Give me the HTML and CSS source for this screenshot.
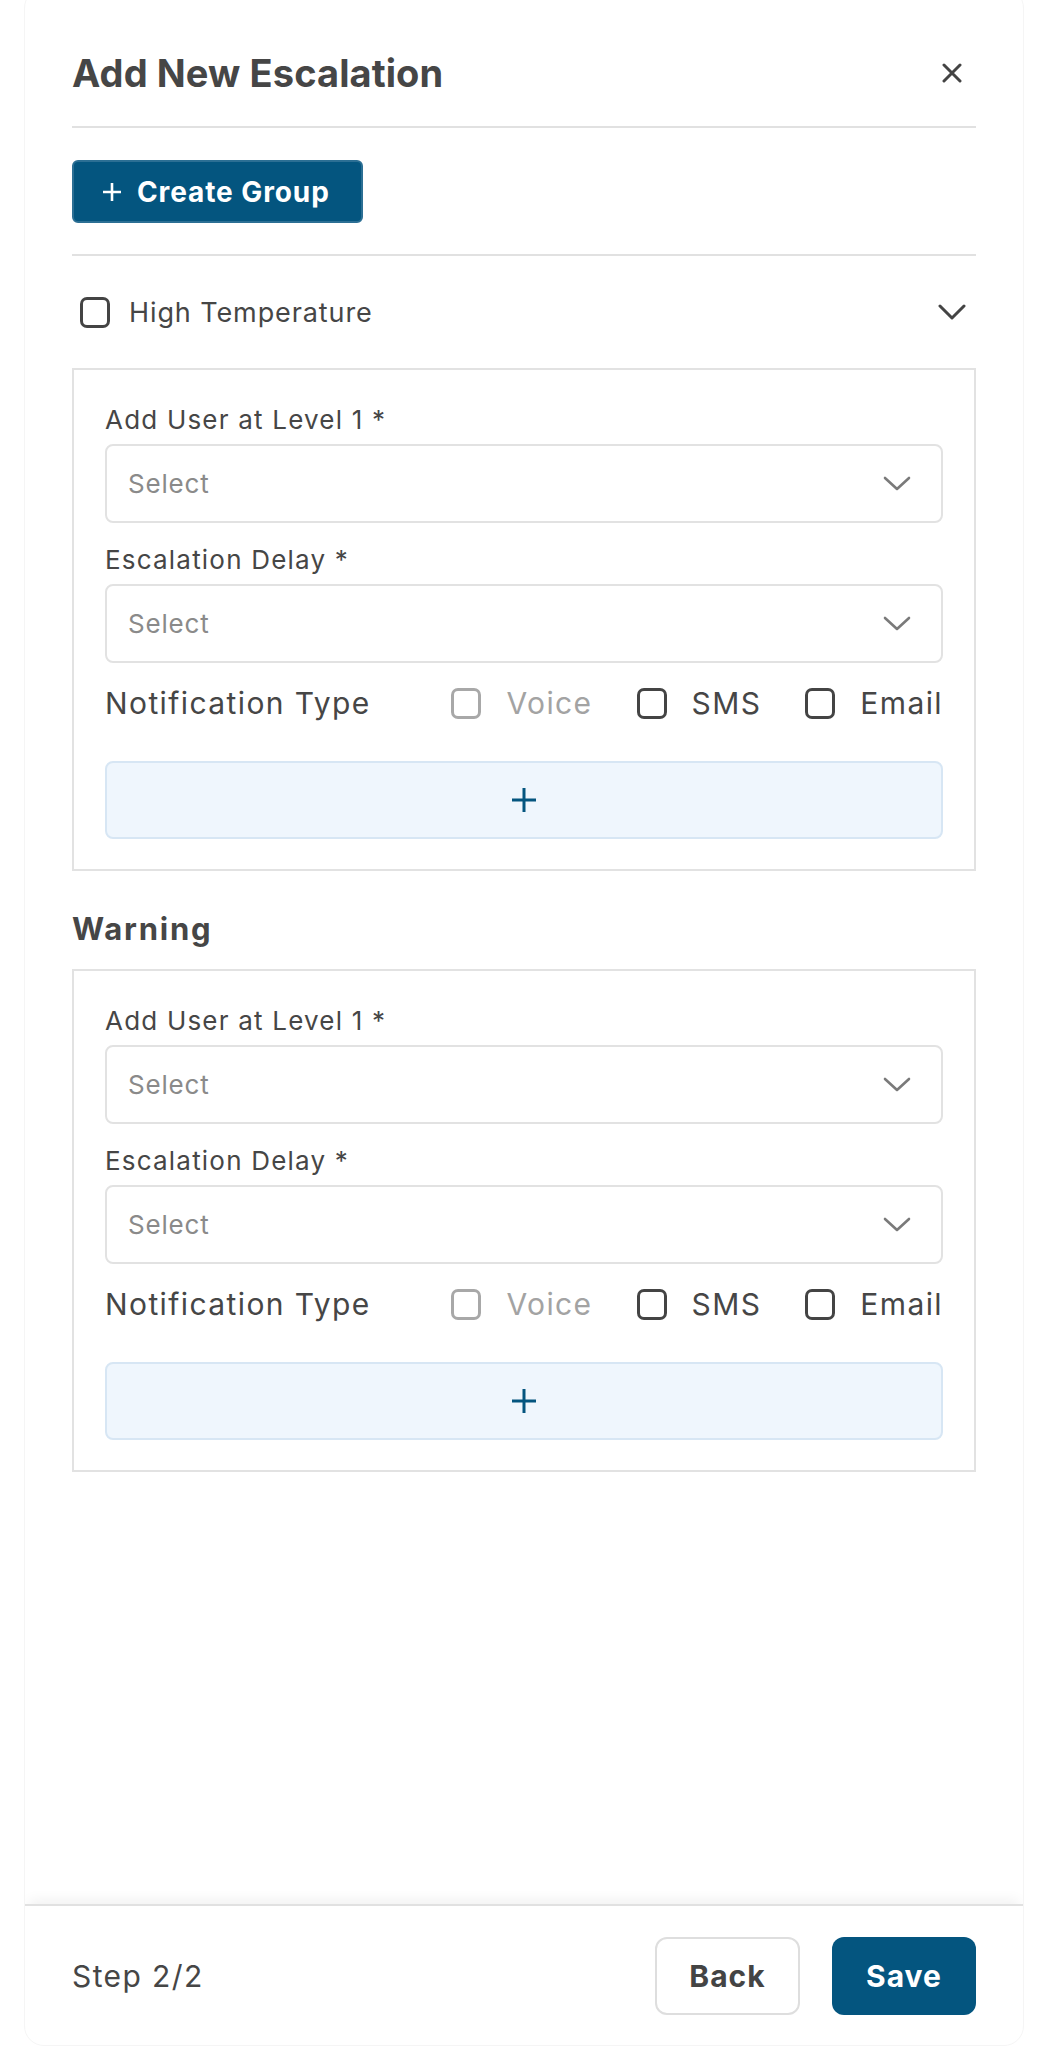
FILE: index.html
```html
<!DOCTYPE html>
<html lang="en">
<head>
  <meta charset="UTF-8">
  <meta name="viewport" content="width=device-width, initial-scale=1.0">
  <title>Add New Escalation</title>
  <link rel="stylesheet" href="styles.css">
</head>

<body>
  <div class="modal">
    <div class="modal-body">
      <div class="modal-head">
        <h2>Add New Escalation</h2>
        <button class="icon-btn" aria-label="Close">
          <svg width="20" height="20" viewBox="0 0 20 20"><path d="M2 2 L18 18 M18 2 L2 18" stroke="#444" stroke-width="3" stroke-linecap="round"/></svg>
        </button>
      </div>

      <div class="toolbar">
        <button class="btn-create">
          <svg width="20" height="20" viewBox="0 0 20 20"><path d="M10 1 V19 M1 10 H19" stroke="#fff" stroke-width="2.6"/></svg>
          Create Group
        </button>
      </div>

      <div class="group-row">
        <label class="check"><span class="box"></span>High Temperature</label>
        <span class="icon-btn">
          <svg width="28" height="16" viewBox="0 0 28 16"><path d="M2 2 L14 14 L26 2" fill="none" stroke="#444" stroke-width="3" stroke-linecap="round" stroke-linejoin="round"/></svg>
        </span>
      </div>

      <div class="level-card">
        <div class="field">
          <label>Add User at Level 1 *</label>
          <div class="select">Select
            <svg width="28" height="15" viewBox="0 0 28 15"><path d="M2 2 L14 13 L26 2" fill="none" stroke="#7a7a7a" stroke-width="2.6" stroke-linecap="round" stroke-linejoin="round"/></svg>
          </div>
        </div>
        <div class="field">
          <label>Escalation Delay *</label>
          <div class="select">Select
            <svg width="28" height="15" viewBox="0 0 28 15"><path d="M2 2 L14 13 L26 2" fill="none" stroke="#7a7a7a" stroke-width="2.6" stroke-linecap="round" stroke-linejoin="round"/></svg>
          </div>
        </div>
        <div class="notif">
          <span>Notification Type</span>
          <div class="options">
            <label class="opt disabled"><span class="box"></span>Voice</label>
            <label class="opt"><span class="box"></span>SMS</label>
            <label class="opt"><span class="box"></span>Email</label>
          </div>
        </div>
        <button class="add-level" aria-label="Add level">
          <svg width="26" height="26" viewBox="0 0 26 26"><path d="M13 1 V25 M1 13 H25" stroke="#04557f" stroke-width="3"/></svg>
        </button>
      </div>

      <h3 class="section-title">Warning</h3>

      <div class="level-card">
        <div class="field">
          <label>Add User at Level 1 *</label>
          <div class="select">Select
            <svg width="28" height="15" viewBox="0 0 28 15"><path d="M2 2 L14 13 L26 2" fill="none" stroke="#7a7a7a" stroke-width="2.6" stroke-linecap="round" stroke-linejoin="round"/></svg>
          </div>
        </div>
        <div class="field">
          <label>Escalation Delay *</label>
          <div class="select">Select
            <svg width="28" height="15" viewBox="0 0 28 15"><path d="M2 2 L14 13 L26 2" fill="none" stroke="#7a7a7a" stroke-width="2.6" stroke-linecap="round" stroke-linejoin="round"/></svg>
          </div>
        </div>
        <div class="notif">
          <span>Notification Type</span>
          <div class="options">
            <label class="opt disabled"><span class="box"></span>Voice</label>
            <label class="opt"><span class="box"></span>SMS</label>
            <label class="opt"><span class="box"></span>Email</label>
          </div>
        </div>
        <button class="add-level" aria-label="Add level">
          <svg width="26" height="26" viewBox="0 0 26 26"><path d="M13 1 V25 M1 13 H25" stroke="#04557f" stroke-width="3"/></svg>
        </button>
      </div>
    </div>

    <div class="modal-foot">
      <span class="step">Step 2/2</span>
      <div class="foot-actions">
        <button class="btn btn-back">Back</button>
        <button class="btn btn-save">Save</button>
      </div>
    </div>
  </div>
</body>
</html>
```

FILE: styles.css
```css
* {
  box-sizing: border-box;
}
body {
  margin: 0;
  background: #fff;
  font-family: "Inter", "Noto Sans", sans-serif;
  color: #464646;
}
button {
  font-family: inherit;
  cursor: pointer;
}
.modal {
  margin: -12px 24px 0;
  height: 2058px;
  border: 1px solid #f5f5f5;
  border-radius: 20px;
  background: #fff;
  display: flex;
  flex-direction: column;
  overflow: hidden;
}
.modal-body {
  flex: 1;
  padding: 0 47px;
}
.modal-head {
  display: flex;
  align-items: center;
  justify-content: space-between;
  padding: 59px 0 28px;
  border-bottom: 2px solid #e1e1e1;
}
.modal-head h2 {
  margin: 0;
  font-size: 38px;
  line-height: 50px;
  font-weight: 700;
  letter-spacing: 0.1px;
}
.icon-btn {
  width: 48px;
  height: 48px;
  display: flex;
  align-items: center;
  justify-content: center;
  border: 0;
  padding: 0;
  background: none;
}
.toolbar {
  display: flex;
  padding: 32px 0 31px;
  border-bottom: 2px solid #e1e1e1;
}
.btn-create {
  display: flex;
  align-items: center;
  gap: 15px;
  width: 291px;
  height: 63px;
  padding: 0 0 0 28px;
  background: #04557f;
  border: 2px solid #2c6f94;
  border-radius: 6px;
  color: #fff;
  font-size: 28px;
  font-weight: 700;
  letter-spacing: 0.9px;
}
.group-row {
  display: flex;
  align-items: center;
  justify-content: space-between;
  height: 112px;
}
.check, .opt {
  display: flex;
  align-items: center;
}
.check {
  gap: 19px;
  padding-left: 8px;
  font-size: 27px;
  letter-spacing: 0.9px;
}
.box {
  flex: none;
  width: 30px;
  height: 31px;
  border: 3px solid #444;
  border-radius: 7px;
}
.level-card {
  border: 2px solid #e2e2e2;
  padding: 34px 31px 30px;
}
.field + .field {
  margin-top: 21px;
}
.field label {
  display: block;
  font-size: 26px;
  line-height: 32px;
  letter-spacing: 1.2px;
  margin-bottom: 8px;
}
.select {
  display: flex;
  align-items: center;
  justify-content: space-between;
  height: 79px;
  padding: 0 30px 0 21px;
  border: 2px solid #e2e2e2;
  border-radius: 8px;
  font-size: 26px;
  letter-spacing: 0.8px;
  color: #8a8a8a;
}
.notif {
  display: flex;
  align-items: center;
  justify-content: space-between;
  height: 40px;
  margin-top: 20px;
  font-size: 30px;
  letter-spacing: 1.4px;
}
.options {
  display: flex;
  gap: 44px;
}
.opt {
  gap: 25px;
}
.opt.disabled {
  color: #a3a3a3;
}
.opt.disabled .box {
  border-color: #a8a8a8;
}
.add-level {
  display: flex;
  align-items: center;
  justify-content: center;
  width: 100%;
  height: 78px;
  margin-top: 38px;
  background: #eff6fd;
  border: 2px solid #d7e6f4;
  border-radius: 8px;
}
.section-title {
  margin: 40px 0 22px;
  font-size: 31px;
  line-height: 36px;
  font-weight: 700;
  letter-spacing: 1.8px;
}
.modal-foot {
  display: flex;
  align-items: center;
  justify-content: space-between;
  padding: 31px 47px 30px;
  border-top: 2px solid #e1e1e1;
  box-shadow: 0 -8px 12px -4px rgba(0, 0, 0, 0.06);
}
.step {
  font-size: 30px;
  letter-spacing: 1.4px;
}
.foot-actions {
  display: flex;
  gap: 32px;
}
.btn {
  height: 78px;
  border-radius: 12px;
  font-size: 30px;
  font-weight: 700;
  letter-spacing: 1px;
}
.btn-back {
  width: 145px;
  background: #fff;
  border: 2px solid #dedede;
  color: #444;
}
.btn-save {
  width: 144px;
  background: #04557f;
  border: 0;
  color: #fff;
}
```
